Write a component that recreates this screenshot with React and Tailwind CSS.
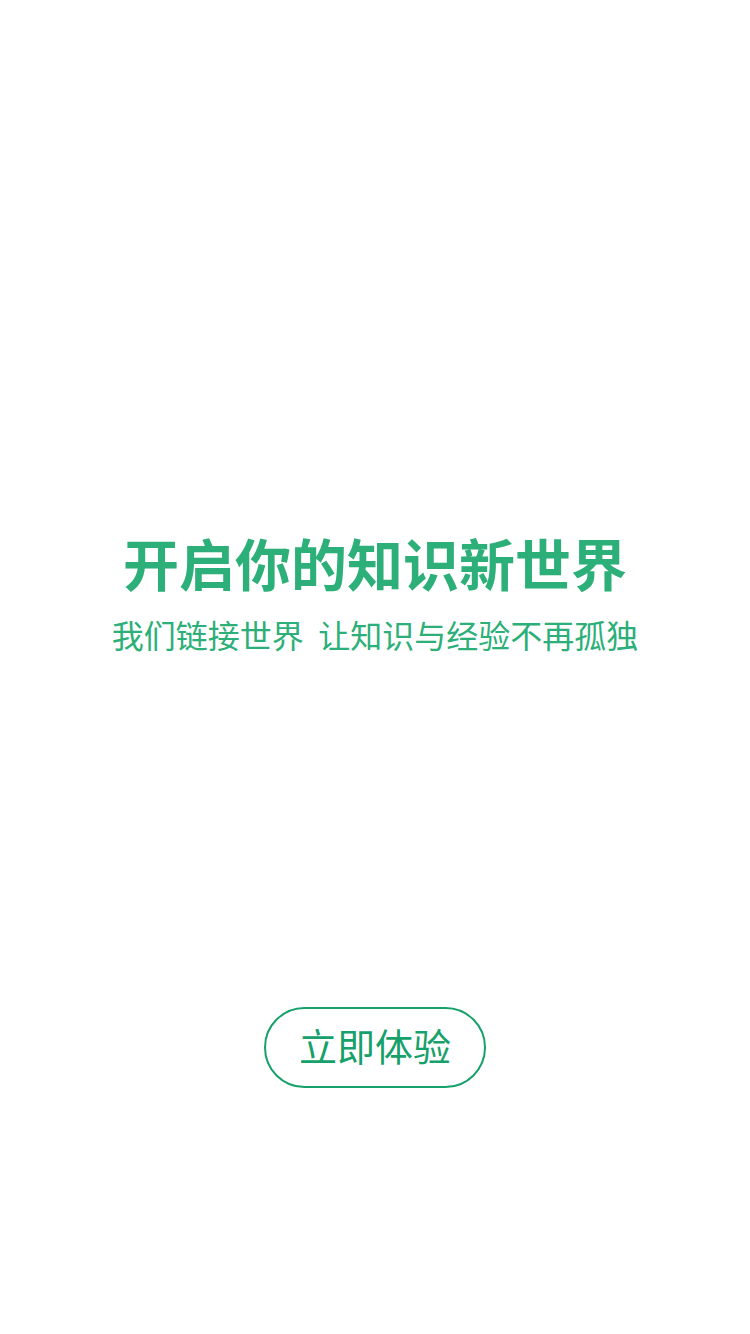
import React from 'react';

const App = () => {
    return (
        <div
            className="w-[750px] h-[1334px] bg-white flex flex-col items-center"
            style={{ fontFamily: '"Noto Sans CJK SC", "Noto Sans", sans-serif' }}
        >
            {/* Headline */}
            <h1 className="mt-[534px] text-[56px] leading-[56px] font-semibold text-[#2caf78]">
                开启你的知识新世界
            </h1>
            <p className="mt-[28px] text-[32px] leading-[32px] text-[#2caf78]">
                我们链接世界&nbsp;&nbsp;让知识与经验不再孤独
            </p>

            {/* CTA */}
            <button className="mt-[357px] w-[222px] h-[81px] rounded-full border-2 border-[#16a06a] text-[38px] leading-none text-[#16a06a] flex items-center justify-center pb-[5px]">
                立即体验
            </button>
        </div>
    );
};

export default App;
